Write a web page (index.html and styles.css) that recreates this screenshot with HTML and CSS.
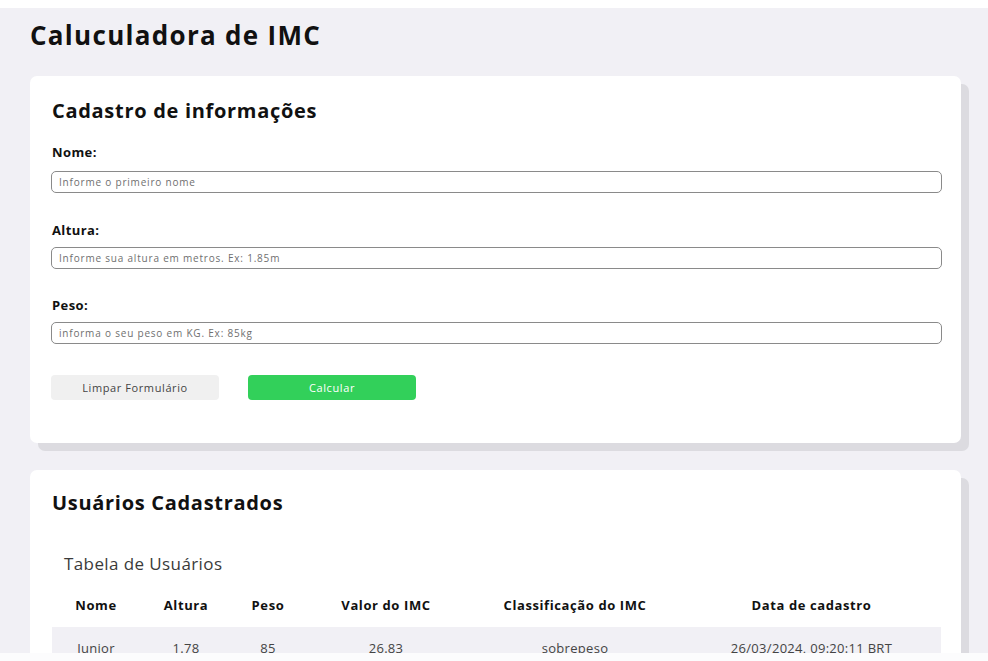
FILE: index.html
```html
<!DOCTYPE html>
<html lang="pt-BR">
<head>
<meta charset="utf-8">
<title>Calculadora de IMC</title>
<link rel="stylesheet" href="styles.css">
</head>
<body>
<main class="page">
  <h1 class="page-title">Caluculadora de IMC</h1>

  <section class="card form-card">
    <h2 class="card-title">Cadastro de informações</h2>
    <form class="form">
      <div class="field">
        <label class="label" for="nome">Nome:</label>
        <input class="input" id="nome" type="text" placeholder="Informe o primeiro nome">
      </div>
      <div class="field">
        <label class="label" for="altura">Altura:</label>
        <input class="input" id="altura" type="text" placeholder="Informe sua altura em metros. Ex: 1.85m">
      </div>
      <div class="field">
        <label class="label" for="peso">Peso:</label>
        <input class="input" id="peso" type="text" placeholder="informa o seu peso em KG. Ex: 85kg">
      </div>
      <div class="actions">
        <button type="button" class="btn btn-clear">Limpar Formulário</button>
        <button type="button" class="btn btn-calc">Calcular</button>
      </div>
    </form>
  </section>

  <section class="card table-card">
    <h2 class="card-title">Usuários Cadastrados</h2>
    <table class="users">
      <caption class="caption">Tabela de Usuários</caption>
      <colgroup>
        <col class="c1"><col class="c2"><col class="c3"><col class="c4"><col class="c5"><col class="c6">
      </colgroup>
      <thead>
        <tr>
          <th>Nome</th><th>Altura</th><th>Peso</th><th>Valor do IMC</th><th>Classificação do IMC</th><th>Data de cadastro</th>
        </tr>
      </thead>
      <tbody>
        <tr>
          <td>Junior</td><td>1.78</td><td>85</td><td>26.83</td><td>sobrepeso</td><td>26/03/2024, 09:20:11 BRT</td>
        </tr>
      </tbody>
    </table>
  </section>
</main>
<div class="bottom-fade"></div>
</body>
</html>
```

FILE: styles.css
```css
* { box-sizing: border-box; }
html, body { margin: 0; padding: 0; }
body {
  background: #ffffff;
  padding-top: 8px;
  font-family: "Open Sans", "Noto Sans", sans-serif;
  color: #111;
}
.page {
  background: #f1f0f5;
  padding: 11px 27px 30px 30px;
  min-height: 700px;
}
.page-title {
  margin: 0 0 25px 0;
  font-size: 26px;
  font-weight: 700;
  line-height: 32px;
  letter-spacing: 1.3px;
}
.card {
  background: #fff;
  border-radius: 7px;
  box-shadow: 8px 8px 0 #dcdbe0;
  padding: 22px 20px 0 22px;
}
.form-card { height: 367px; margin-bottom: 27px; }
.card-title {
  margin: 0;
  font-size: 20px;
  font-weight: 700;
  line-height: 26px;
  letter-spacing: 0.7px;
}
.form { margin-top: 19px; }
.field { margin-bottom: 27px; }
.field:first-child { margin-bottom: 28px; }
.label {
  display: block;
  font-size: 13px;
  font-weight: 700;
  line-height: 18px;
  margin-bottom: 10px;
  letter-spacing: 0.4px;
}
.field + .field .label { margin-bottom: 8px; }
.input {
  display: block;
  width: calc(100% + 2px);
  margin-left: -1px;
  height: 22px;
  border: 1px solid #8a8a8a;
  border-radius: 5px;
  padding: 0 7px;
  font-family: inherit;
  font-size: 10px;
  letter-spacing: 0.8px;
  color: #333;
  background: #fff;
}
.input::placeholder { color: #6f6f6f; }
.actions {
  display: flex;
  gap: 29px;
  margin-top: 31px;
}
.btn {
  width: 168px;
  height: 25px;
  border: none;
  border-radius: 4px;
  font-family: inherit;
  font-size: 11px;
  letter-spacing: 0.6px;
}
.btn-clear { background: #f0f0f0; color: #444; margin-left: -1px; }
.btn-calc { background: #32d05a; color: #fff; }
.table-card { padding-top: 20px; height: 400px; }
.users {
  margin-top: 37px;
  width: 100%;
  border-collapse: collapse;
  table-layout: fixed;
}
.caption {
  text-align: left;
  padding-left: 12px;
  font-size: 17px;
  color: #3a3a3a;
  line-height: 22px;
  letter-spacing: 0.4px;
  padding-bottom: 21px;
}
.c1 { width: 88px; }
.c2 { width: 92px; }
.c3 { width: 72px; }
.c4 { width: 164px; }
.c5 { width: 214px; }
.c6 { width: auto; }
.users th {
  font-size: 13px;
  font-weight: 700;
  text-align: center;
  height: 31px;
  vertical-align: top;
  padding: 0;
  letter-spacing: 0.6px;
}
.users td {
  background: #f1f0f5;
  font-size: 13px;
  color: #444;
  text-align: center;
  height: 42px;
  padding: 0;
  letter-spacing: 0.3px;
}
.bottom-fade {
  position: fixed;
  left: 0;
  right: 0;
  bottom: 0;
  height: 8px;
  background: #fcfcfd;
}
```
